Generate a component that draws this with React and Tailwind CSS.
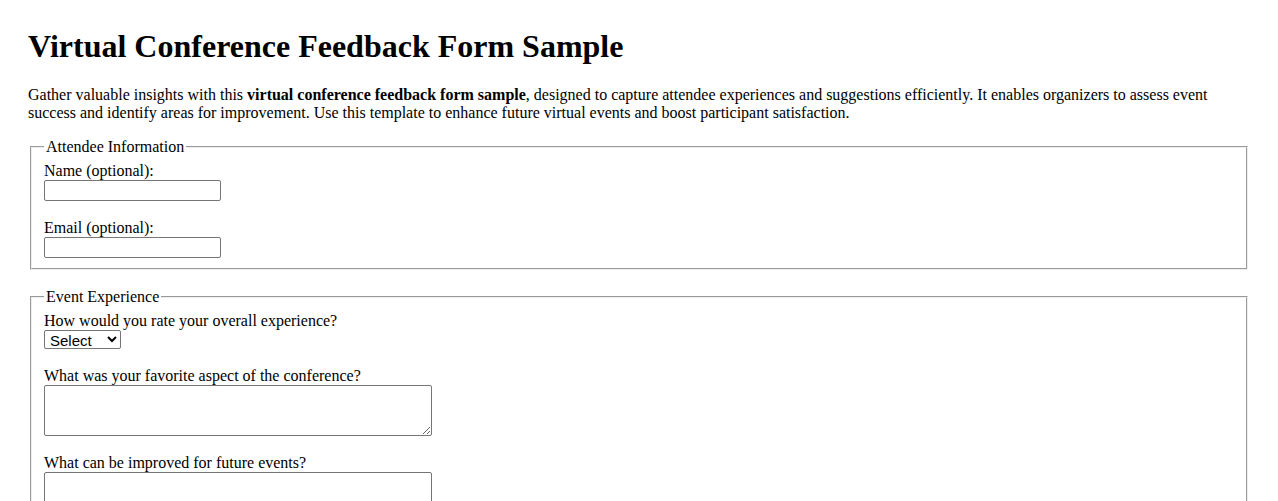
import React from 'react';

const inputCls =
  "block w-[177px] h-[21px] border border-[#767676] rounded-[2px] px-[2px] py-[1px] text-[13.33px] font-['Liberation_Sans',Arial,sans-serif] bg-white";
const areaCls =
  "block w-[388px] h-[51px] border border-[#767676] rounded-[2px] px-[2px] py-[2px] text-[13.33px] font-['Liberation_Mono',monospace] bg-white";
const fieldsetCls =
  "mx-[2px] px-[12px] pb-[10px] border-2 [border-style:groove] border-[#eeeeee] min-w-0";

const FeedbackForm = () => {
  return (
    <div className="min-h-screen bg-white text-black font-['Liberation_Serif','Times_New_Roman',serif] text-[16px] leading-[18px] px-[28px] pt-[28px] pb-[28px]">
      <h1 className="text-[32px] leading-[37px] font-bold mb-[21px]">Virtual Conference Feedback Form Sample</h1>
      <p className="mb-[16px]">
        Gather valuable insights with this <strong className="font-bold">virtual conference feedback form sample</strong>, designed to capture attendee experiences and suggestions efficiently. It enables organizers to assess event success and identify areas for improvement. Use this template to enhance future virtual events and boost participant satisfaction.
      </p>

      <form>
        <fieldset className={fieldsetCls + " pt-[5.6px] mb-[18px]"}>
          <legend className="px-[2px] -mt-px">Attendee Information</legend>
          <div className="flex flex-col gap-[18px]">
            <div>
              <label htmlFor="name">Name (optional):</label>
              <input id="name" type="text" className={inputCls} />
            </div>
            <div>
              <label htmlFor="email">Email (optional):</label>
              <input id="email" type="email" className={inputCls} />
            </div>
          </div>
        </fieldset>

        <fieldset className={fieldsetCls + " pt-[6.6px]"}>
          <legend className="px-[2px] -mt-px">Event Experience</legend>
          <div className="flex flex-col gap-[18px]">
            <div>
              <label htmlFor="rating">How would you rate your overall experience?</label>
              <select
                id="rating"
                className="block w-[77px] h-[19px] border border-[#767676] rounded-[2px] bg-white text-[15px] font-['Liberation_Sans',Arial,sans-serif] pl-px"
              >
                <option>Select</option>
                <option>Excellent</option>
                <option>Good</option>
                <option>Average</option>
                <option>Poor</option>
              </select>
            </div>
            <div>
              <label htmlFor="favorite">What was your favorite aspect of the conference?</label>
              <textarea id="favorite" className={areaCls}></textarea>
            </div>
            <div>
              <label htmlFor="improve">What can be improved for future events?</label>
              <textarea id="improve" className={areaCls}></textarea>
            </div>
          </div>
        </fieldset>
      </form>
    </div>
  );
};

export default FeedbackForm;
